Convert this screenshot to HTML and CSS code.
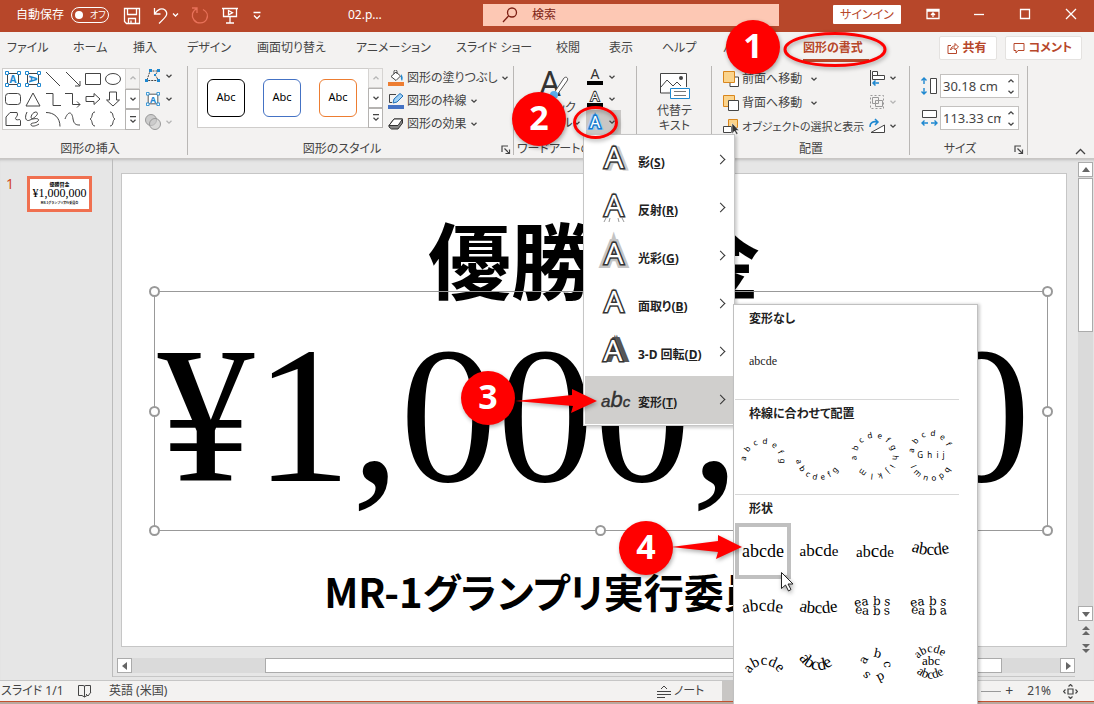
FILE: index.html
```
<!DOCTYPE html>
<html lang="ja">
<head>
<meta charset="utf-8">
<title>02.pptx</title>
<link rel="stylesheet" href="styles.css">
</head>
<body>
<svg class="defs" aria-hidden="true">
  <symbol id="chev" viewBox="0 0 8 8"><path d="M1.500 2.800 4 5.200 6.500 2.800" fill="none" stroke="currentColor" stroke-width="1.300"/></symbol>
  <symbol id="up" viewBox="0 0 8 8"><path d="M1.500 5.200 4 2.800 6.500 5.200" fill="none" stroke="currentColor" stroke-width="1.300"/></symbol>
  <symbol id="launch" viewBox="0 0 10 10"><path d="M1 7V1h6M3.500 3.500 8 8M8.500 4.500v4h-4" fill="none" stroke="#444" stroke-width="1.200"/></symbol>
  <symbol id="textbox" viewBox="0 0 16 16"><path d="M2.500 2.500h11v11h-11z" fill="#fff" stroke="#444"/><g fill="#fff" stroke="#1e88d0"><path d="M.5.5h3v3h-3zM12.500.5h3v3h-3zM.5 12.500h3v3h-3zM12.500 12.500h3v3h-3z"/></g><text x="8" y="12" text-anchor="middle" font-size="10" font-weight="700" fill="#1e88d0">A</text></symbol>
</svg>

<header class="titlebar">
  <span class="autosave">自動保存</span>
  <button class="toggle" aria-label="自動保存"><i></i>オフ</button>
  <button class="tb save" aria-label="保存"><svg width="18" height="18" viewBox="0 0 18 18"><path d="M1.500 1.500h15v15h-13l-2-2zM4.500 1.500v6h9v-6M5.500 16.500v-5h7v5M8 16.500v-3" /></svg></button>
  <button class="tb undo" aria-label="元に戻す"><svg width="28" height="18" viewBox="0 0 28 18"><path d="M1.500 1v6h6M1.500 7C5 2 9 .5 12 3c4 4 1 7-6 13.500"/><path d="m20 6.500 2.500 2.500L25 6.500"/></svg></button>
  <button class="tb redo" aria-label="やり直し"><svg width="18" height="18" viewBox="0 0 18 18"><path d="M1 1h5v5M6 1.500C1 4 0 9 3 13c3 4 10 4 12.500-.5 2-4 .5-8-3.500-10"/></svg></button>
  <button class="tb show" aria-label="スライド ショー"><svg width="16" height="18" viewBox="0 0 16 18"><path d="M0 1.500h16M1.500 1.500v8h13v-8M8 9.500v6M4 16h8"/><path d="m6.500 3.500 4 2.200-4 2.200z"/></svg></button>
  <button class="tb more" aria-label="カスタマイズ"><svg width="10" height="10" viewBox="0 0 10 10"><path d="M1.500 1.500h7M2 4.500l3 3 3-3"/></svg></button>
  <span class="doc">02.p…</span>
  <label class="search"><svg width="16" height="16" viewBox="0 0 16 16"><circle cx="10" cy="5.500" r="4.500"/><path d="M6.500 9 1 15"/></svg><input type="text" aria-label="検索" placeholder="検索"></label>
  <button class="signin">サインイン</button>
  <div class="winbtns">
    <button aria-label="リボンの表示オプション"><svg width="14" height="12" viewBox="0 0 14 12"><path d="M1 1.500h12v9H1zM1 3h12M7 9V5M5 7l2-2 2 2"/></svg></button>
    <button aria-label="最小化"><svg width="12" height="12" viewBox="0 0 12 12"><path d="M1 6.500h10"/></svg></button>
    <button aria-label="最大化"><svg width="12" height="12" viewBox="0 0 12 12"><path d="M1.500 1.500h9v9h-9z"/></svg></button>
    <button aria-label="閉じる"><svg width="12" height="12" viewBox="0 0 12 12"><path d="m1 1 10 10M11 1 1 11"/></svg></button>
  </div>
</header>

<nav class="tabs">
  <a href="#">ファイル</a><a href="#">ホーム</a><a href="#">挿入</a><a href="#">デザイン</a><a href="#">画面切り替え</a><a href="#">アニメーション</a><a href="#">スライド ショー</a><a href="#">校閲</a><a href="#">表示</a><a href="#">ヘルプ</a><a href="#">バ</a><a href="#" class="active">図形の書式</a>
  <div class="actions">
    <button><svg width="12" height="12" viewBox="0 0 12 12"><path d="M4 3.500H1v8h8.500V8M3.500 8C4 5 6 4 8 4V1.500L11.500 5 8 8V6C6 6 4.500 6.500 3.500 8z"/></svg>共有</button>
    <button><svg width="12" height="12" viewBox="0 0 12 12"><path d="M1 1.500h10v7H5L3 11V8.500H1z"/></svg>コメント</button>
  </div>
</nav>

<section class="ribbon">
  <div class="group g-insert">
    <div class="body">
      <div class="gallery">
        <div class="shapes">
          <svg viewBox="0 0 16 16"><use href="#textbox"/></svg>
          <svg viewBox="0 0 16 16"><g transform="rotate(90 8 8)"><use href="#textbox" width="16" height="16"/></g></svg>
          <svg viewBox="0 0 16 16"><path d="m1 1 14 14"/></svg>
          <svg viewBox="0 0 16 16"><path d="m1 1 14 14M15 10v5h-5"/></svg>
          <svg viewBox="0 0 16 16"><path d="M.5 2.500h15v11H.5z"/></svg>
          <svg viewBox="0 0 16 16"><ellipse cx="8" cy="8" rx="7.500" ry="5.500"/></svg>
          <svg viewBox="0 0 16 16"><rect x=".5" y="2.500" width="15" height="11" rx="3"/></svg>
          <svg viewBox="0 0 16 16"><path d="M8 2 15 15H1z"/></svg>
          <svg viewBox="0 0 16 16"><path d="M1 2.500h7v12h8"/></svg>
          <svg viewBox="0 0 16 16"><path d="M0 2.500h7.500v11H15M12 10.500l3 3-3 3"/></svg>
          <svg viewBox="0 0 16 16"><path d="M1 5.500h8v-3L15 8l-6 5.500v-3H1z"/></svg>
          <svg viewBox="0 0 16 16"><path d="M4.500 1v8h-3L8 15l6.500-6h-3V1z"/></svg>
          <svg viewBox="0 0 16 16"><path d="M1 14.500V6l4-4.500h7c2 4-3 5-1 7 2 1 4-1 4.500 1v5z"/></svg>
          <svg viewBox="0 0 16 16"><path d="M2 1c-3 6-1 10 3 8 5-2 10-7 6-8-4 0-7 7-3 7 4-1 7 0 5 2-2 3-8 1-7 4 1 2 5 1 8-1"/></svg>
          <svg viewBox="0 0 16 16"><path d="M1 1.500c8 0 14 5 14 14"/></svg>
          <svg viewBox="0 0 16 16"><path d="M0 8c3-8 7-8 8 0 1 6 4 6 7 6"/></svg>
          <svg viewBox="0 0 16 16"><path d="M10 1c-4 0-2 6-5 7 3 1 1 7 5 7"/></svg>
          <svg viewBox="0 0 16 16"><path d="M5 1c4 0 2 6 5 7-3 1-1 7-5 7"/></svg>
        </div>
        <div class="gscroll">
          <button class="off" aria-label="前の行"><svg><use href="#up"/></svg></button>
          <button aria-label="次の行"><svg><use href="#chev"/></svg></button>
          <button aria-label="その他"><svg viewBox="0 0 8 8"><path d="M1 .6h6M1.500 3.800 4 6.200 6.500 3.800" fill="none" stroke="currentColor" stroke-width="1.200"/></svg></button>
        </div>
      </div>
      <div class="iconcol">
        <button aria-label="図形の編集"><svg width="16" height="14" viewBox="0 0 16 14"><path d="M2 11 5 2h9L10 5.500l3.500 6H2" fill="none" stroke="#444" stroke-dasharray="2 1"/><path d="M4 0h3v3H4zM12 0h3v3h-3zM0 10h3v3H0zM12 10h3v3h-3zM9 5h2v2H9z" fill="#1e88d0"/></svg><svg class="c"><use href="#chev"/></svg></button>
        <button aria-label="テキスト ボックス"><svg width="16" height="14" viewBox="0 0 16 16"><use href="#textbox"/></svg><svg class="c"><use href="#chev"/></svg></button>
        <button class="off" aria-label="図形の結合"><svg width="16" height="16" viewBox="0 0 16 16"><circle cx="6" cy="6" r="5.500" fill="#ccc" stroke="#999"/><circle cx="10" cy="10" r="5.500" fill="#ccc" fill-opacity=".6" stroke="#999"/></svg><svg class="c"><use href="#chev"/></svg></button>
      </div>
    </div>
    <div class="label"><span>図形の挿入</span></div>
  </div>

  <div class="group g-style">
    <div class="body">
      <div class="presets">
        <button class="p1">Abc</button><button class="p2">Abc</button><button class="p3">Abc</button>
        <div class="gscroll">
          <button class="off" aria-label="前の行"><svg><use href="#up"/></svg></button>
          <button aria-label="次の行"><svg><use href="#chev"/></svg></button>
          <button aria-label="その他"><svg viewBox="0 0 8 8"><path d="M1 .6h6M1.500 3.800 4 6.200 6.500 3.800" fill="none" stroke="currentColor" stroke-width="1.200"/></svg></button>
        </div>
      </div>
      <div class="cmds">
        <button><svg width="16" height="16" viewBox="0 0 16 16"><path d="M0 12h16v4H0z" fill="#ed7d31"/><path d="M3 6.500 8 2l4.500 4L8 10.500zM6 4V1.500A1.500 1.500 0 0 1 9 1.500V4" fill="#fff" stroke="#444"/><path d="M13 4c2 2 2 5 1 7-1-1-1.500-3-1-7z" fill="#1e88d0"/></svg>図形の塗りつぶし<svg class="c"><use href="#chev"/></svg></button>
        <button><svg width="16" height="16" viewBox="0 0 16 16"><path d="M0 12h16v4H0z" fill="#4472c4"/><path d="M8 1.500H1.500v8H4" fill="none" stroke="#444"/><path d="m5 10 1-4 6-5.500L15 3 9 9z" fill="#9fd0f5" stroke="#1e6fb8"/></svg>図形の枠線<svg class="c"><use href="#chev"/></svg></button>
        <button><svg width="16" height="16" viewBox="0 0 16 16"><path d="M1 9.500 6 3h8.500v4L10 13H3.500L1 11z" fill="#888" stroke="#333"/><path d="M1 9.500 6 3h8.500L10 9.500z" fill="#fff" stroke="#333"/></svg>図形の効果<svg class="c"><use href="#chev"/></svg></button>
      </div>
    </div>
    <div class="label"><span>図形のスタイル</span><svg class="launch"><use href="#launch"/></svg></div>
  </div>

  <div class="group g-wordart">
    <div class="body">
      <button class="quick"><svg width="32" height="30" viewBox="0 0 32 30"><text x="0" y="26" font-size="34" fill="#333">A</text><path d="m15 23 10-15c2-2 5 0 3 3L18 25z" fill="#fff" stroke="#555"/><circle cx="15" cy="25" r="4" fill="#5aaeee"/></svg><span>クイック</span><span>スタイル<svg class="c"><use href="#chev"/></svg></span></button>
      <div class="acol">
        <button aria-label="文字の塗りつぶし"><svg width="16" height="16" viewBox="0 0 16 16"><text x="8" y="10" text-anchor="middle" font-size="14" fill="#333">A</text><path d="M0 12h16v4H0z"/></svg><svg class="c"><use href="#chev"/></svg></button>
        <button aria-label="文字の輪郭"><svg width="16" height="16" viewBox="0 0 16 16"><text x="8" y="10" text-anchor="middle" font-size="13" fill="#fff" stroke="#333" stroke-width="2" paint-order="stroke">A</text><path d="M0 12h16v4H0z"/></svg><svg class="c"><use href="#chev"/></svg></button>
        <button class="on" aria-label="文字の効果"><svg width="18" height="18" viewBox="0 0 18 18"><text x="9" y="15" text-anchor="middle" font-size="16" font-weight="700" fill="none" stroke="#9cd0f8" stroke-width="4">A</text><text x="9" y="15" text-anchor="middle" font-size="16" fill="#fff" stroke="#1778cc" stroke-width="3" paint-order="stroke">A</text></svg><svg class="c"><use href="#chev"/></svg></button>
      </div>
    </div>
    <div class="label"><span>ワードアートのスタイル</span></div>
  </div>

  <div class="group g-alt">
    <button class="alt"><svg width="32" height="28" viewBox="0 0 32 28"><path d="M1.500 21V1.500h26V15M1.500 21H11" fill="#fff" stroke="#444"/><path d="m2 15 6-7 6 6 4-4 4 4" fill="none" stroke="#444"/><circle cx="22" cy="6" r="2" fill="#444"/><path d="M11.500 16.500h19v10h-19z" fill="#fff" stroke="#1e88d0"/><path d="M15 19.500h12M15 23.500h12" stroke="#777"/></svg><span>代替テ</span><span>キスト</span></button>
  </div>

  <div class="group g-arrange">
    <div class="body">
      <div class="cmds">
        <button><svg width="16" height="16" viewBox="0 0 16 16"><path d="M7 6h8.500v9.500H7z" fill="#fff" stroke="#444"/><path d="M.5.5h11v11H.5z" fill="#fbd48c" stroke="#d9861c"/></svg>前面へ移動<svg class="c wide"><use href="#chev"/></svg></button>
        <button><svg width="16" height="16" viewBox="0 0 16 16"><path d="M.5.5h11v11H.5z" fill="#fbd48c" stroke="#d9861c"/><path d="M5.500 5.500h10v10h-10z" fill="#fff" stroke="#444"/></svg>背面へ移動<svg class="c wide"><use href="#chev"/></svg></button>
        <button class="long"><svg width="16" height="16" viewBox="0 0 16 16"><path d="M5.500.5h9v8h-9z" fill="#fbd48c" stroke="#d9861c"/><path d="M.5 7.500h8v6h-8z" fill="#fff" stroke="#444"/><path d="M9 4v11l2.500-3 2 3.500 1.500-1-2-3h3z" fill="#333" stroke="#fff" stroke-width=".5"/></svg>オブジェクトの選択と表示</button>
      </div>
      <div class="iconcol">
        <button aria-label="配置"><svg width="16" height="16" viewBox="0 0 16 16"><path d="M1.500 0v16M3.500 1.500h5v4h-5zM3.500 5.500h12v4h-12z" fill="#fff" stroke="#444"/><path d="M4 13h6M6.500 10.500 4 13l2.500 2.500" fill="none" stroke="#1e88d0" stroke-width="1.500"/></svg><svg class="c"><use href="#chev"/></svg></button>
        <button class="off" aria-label="グループ化"><svg width="16" height="16" viewBox="0 0 16 16"><path d="M3.500 3.500h6v6h-6zM6.500 6.500h7v6h-7z" fill="none" stroke="#999"/><path d="M1.500 1.500h13v13h-13z" fill="none" stroke="#999" stroke-dasharray="2 2"/></svg><svg class="c"><use href="#chev"/></svg></button>
        <button aria-label="回転"><svg width="16" height="16" viewBox="0 0 16 16"><path d="M2 14.500h13.500V7z" fill="#fff" stroke="#444"/><path d="M1 9c0-5 4-6 7-5M6 1l3 3-3 3" fill="none" stroke="#1e88d0" stroke-width="1.500"/></svg><svg class="c"><use href="#chev"/></svg></button>
      </div>
    </div>
    <div class="label"><span>配置</span></div>
  </div>

  <div class="group g-size">
    <div class="body">
      <div class="size"><svg width="17" height="18" viewBox="0 0 17 18"><path d="M3 1v6M3 11v6M.5 3.500 3 1l2.500 2.500M.5 14.500 3 17l2.500-2.500" fill="none" stroke="#1e88d0" stroke-width="1.400"/><path d="M9.500 1.500h6v15h-6z" fill="#fff" stroke="#444"/></svg><div class="spin"><input type="text" aria-label="高さ" value="30.18 cm"><div><button aria-label="高さを増やす"><svg><use href="#up"/></svg></button><button aria-label="高さを減らす"><svg><use href="#chev"/></svg></button></div></div></div>
      <div class="size"><svg width="17" height="18" viewBox="0 0 17 18"><path d="M1.500 1.500h14v7h-14z" fill="#fff" stroke="#444"/><path d="M1 14h6M10 14h6M3.500 11.500 1 14l2.500 2.500M13.500 11.500 16 14l-2.500 2.500" fill="none" stroke="#1e88d0" stroke-width="1.400"/></svg><div class="spin"><input type="text" aria-label="幅" value="113.33 cm"><div><button aria-label="幅を増やす"><svg><use href="#up"/></svg></button><button aria-label="幅を減らす"><svg><use href="#chev"/></svg></button></div></div></div>
    </div>
    <div class="label"><span>サイズ</span><svg class="launch"><use href="#launch"/></svg></div>
  </div>
  <button class="collapse" aria-label="リボンを折りたたむ"><svg width="11" height="7" viewBox="0 0 11 7"><path d="m1 6 4.500-4.500L10 6" fill="none" stroke="#444" stroke-width="1.300"/></svg></button>
</section>

<main class="work">
  <aside class="thumbs">
    <span class="num">1</span>
    <div class="thumb"><b>優勝賞金</b><span>¥1,000,000</span><i>MR-1グランプリ実行委員会</i></div>
  </aside>
  <div class="stage">
    <article class="slide">
      <h1>優勝賞金</h1>
      <div class="amount">¥1,000,000<i class="h nw"></i><i class="h ne"></i><i class="h w"></i><i class="h e"></i><i class="h sw"></i><i class="h s"></i><i class="h se"></i></div>
      <p>MR-1グランプリ実行委員会</p>
    </article>
    <div class="hscroll">
      <button aria-label="左へスクロール"><svg width="6" height="8"><path d="M5 0v8L0 4z" fill="#666"/></svg></button><div class="track"><div class="bar"></div></div><button aria-label="右へスクロール"><svg width="6" height="8"><path d="M1 0v8l5-4z" fill="#666"/></svg></button>
    </div>
  </div>
  <div class="vscroll">
    <button aria-label="上へスクロール"><svg width="8" height="6"><path d="M0 5h8L4 0z" fill="#666"/></svg></button>
    <div class="track"><div class="bar"></div></div>
    <button aria-label="下へスクロール"><svg width="8" height="6"><path d="M0 1h8L4 6z" fill="#666"/></svg></button>
    <button class="pg" aria-label="前のスライド"><svg width="8" height="9"><path d="M0 4h8L4 0zM0 9h8L4 5z" fill="#666"/></svg></button>
    <button class="pg" aria-label="次のスライド"><svg width="8" height="9"><path d="M0 0h8L4 4zM0 5h8L4 9z" fill="#666"/></svg></button>
  </div>
</main>

<footer class="status">
  <span class="count">スライド 1/1</span>
  <svg width="15" height="14" viewBox="0 0 15 14"><path d="M7.500 2v11L5 11.500H1.500v-10H6zM7.500 2 9 1.500h4.500v7M7.500 13l2.500-1.500M9 10l2 2 3-4" fill="none" stroke="#444"/></svg>
  <span class="lang">英語 (米国)</span>
  <button class="notes"><svg width="14" height="13" viewBox="0 0 14 13"><path d="M4 4l3-3 3 3M0 6.500h14M0 9.500h14M0 12.500h8" fill="none" stroke="#444"/></svg>ノート</button>
  <button class="view" aria-label="標準"></button>
  <div class="zoombar"><i></i><button aria-label="拡大">+</button><span>21%</span><svg width="15" height="15" viewBox="0 0 15 15"><path d="M5 5h5v5H5zM5.500 2.500l2-2 2 2M5.500 12.500l2 2 2-2M2.500 5.500l-2 2 2 2M12.500 5.500l2 2-2 2" fill="none" stroke="#444" stroke-width="1.200"/></svg></div>
</footer>
<div class="edge"></div>

<ul class="menu">
  <li><button><svg viewBox="0 0 30 30"><text x="17" y="26" class="ga sh">A</text><text x="14" y="25" class="ga">A</text></svg><span>影(<u>S</u>)</span><em></em></button></li>
  <li><button><svg viewBox="0 0 30 30"><path d="m4 31 2-4M9 31l1-4M19 31l-1-4M24 31l-2-4" stroke="#999" fill="none"/><text x="14" y="25" class="ga">A</text></svg><span>反射(<u>R</u>)</span><em></em></button></li>
  <li><button><svg viewBox="0 0 30 30"><text x="14" y="25" class="ga glow">A</text><text x="14" y="25" class="ga">A</text></svg><span>光彩(<u>G</u>)</span><em></em></button></li>
  <li><button><svg viewBox="0 0 30 30"><text x="14" y="25" class="ga">A</text></svg><span>面取り(<u>B</u>)</span><em></em></button></li>
  <li><button><svg viewBox="0 0 30 30"><text x="17" y="25" class="ga deep">A</text><text x="15" y="25" class="ga deep">A</text><text x="13" y="26" class="ga">A</text></svg><span>3-D 回転(<u>D</u>)</span><em></em></button></li>
  <li class="sel"><button><svg viewBox="0 0 30 30"><text x="1" y="24" font-family="Liberation Sans" font-style="italic" font-weight="400" fill="#333" stroke="#333" stroke-width=".4"><tspan font-size="17">a</tspan><tspan font-size="22">b</tspan><tspan font-size="15">c</tspan></text></svg><span>変形(<u>T</u>)</span><em></em></button></li>
</ul>

<section class="submenu">
  <h2>変形なし</h2>
  <button class="none">abcde</button>
  <h2 class="rule">枠線に合わせて配置</h2>
  <div class="grid path">
    <button aria-label="円弧"><svg viewBox="0 0 56 56"><path id="a1" d="M11 33A17 17 0 1 1 45 33"/><text><textPath href="#a1">a  b  c  d  e  f  g</textPath></text></svg></button>
    <button aria-label="円弧: 下向き"><svg viewBox="0 0 56 56"><path id="a2" d="M5 29A23 23 0 0 0 51 29"/><text><textPath href="#a2" startOffset="3">a  b  c  d  e  f  g</textPath></text></svg></button>
    <button aria-label="円"><svg viewBox="0 0 56 56"><path id="a3" d="M10 32A18 18 0 1 1 11 35"/><text><textPath href="#a3">a  b  c  d  e  f  g  h  i  j  k  l  m  n</textPath></text></svg></button>
    <button aria-label="ボタン"><svg viewBox="0 0 56 56"><path id="a4" d="M11 25A17 17 0 0 1 45 25L47 32"/><path id="a5" d="M6 31A22 22 0 0 0 50 31"/><text><textPath href="#a4">a  b  c  d  e  f</textPath></text><text><textPath href="#a5" startOffset="8">l  m  n  o  p  q</textPath></text><text x="28" y="30" text-anchor="middle">G  h  i  j</text></svg></button>
  </div>
  <h2 class="rule">形状</h2>
  <div class="grid warp">
    <button class="sel" aria-label="四角"><svg viewBox="0 0 56 56"><text x="28" y="34" text-anchor="middle" font-size="18">abcde</text></svg></button>
    <button aria-label="凸レンズ"><svg viewBox="0 0 56 56"><text x="28" y="33" text-anchor="middle"><tspan font-size="15">a</tspan><tspan font-size="17">b</tspan><tspan font-size="19">c</tspan><tspan font-size="17">d</tspan><tspan font-size="15">e</tspan></text></svg></button>
    <button aria-label="山形"><svg viewBox="0 0 56 56"><text x="28" y="34" text-anchor="middle"><tspan font-size="15">a</tspan><tspan font-size="16">b</tspan><tspan font-size="19">c</tspan><tspan font-size="16">d</tspan><tspan font-size="15">e</tspan></text></svg></button>
    <button aria-label="谷形"><svg viewBox="0 0 56 56"><path id="w4" d="M8 28Q28 36 52 28"/><text font-size="17"><textPath href="#w4">abcde</textPath></text></svg></button>
    <button aria-label="波形"><svg viewBox="0 0 56 56"><path id="w5" d="M8 34Q28 29 52 35"/><text font-size="17"><textPath href="#w5">abcde</textPath></text></svg></button>
    <button aria-label="波形 2"><svg viewBox="0 0 56 56"><path id="w6" d="M8 32Q28 37 52 31"/><text font-size="17"><textPath href="#w6">abcde</textPath></text></svg></button>
    <button aria-label="リング: 内側"><svg viewBox="0 0 56 56"><path id="w7" d="M8 28Q28 24 54 28"/><path id="w8" d="M8 34Q28 38 54 34"/><text font-size="12" class="fat"><textPath href="#w7">ea b s</textPath></text><text font-size="12" class="fat"><textPath href="#w8">ea b s</textPath></text></svg></button>
    <button aria-label="リング: 外側"><svg viewBox="0 0 56 56"><text font-size="12" class="fat"><textPath href="#w7">ea b s</textPath></text><text font-size="12" class="fat"><textPath href="#w8">ea b a</textPath></text></svg></button>
    <button aria-label="アーチ"><svg viewBox="0 0 56 56"><path id="w9" d="M15 39A16 16 0 0 1 45 42"/><text font-size="15"><textPath href="#w9">abcde</textPath></text></svg></button>
    <button aria-label="アーチ: 下向き"><svg viewBox="0 0 56 56"><path id="w10" d="M8 23Q15 35 28 35T52 18"/><text font-size="17"><textPath href="#w10">abcde</textPath></text></svg></button>
    <button aria-label="円"><svg viewBox="0 0 56 56"><path id="w11" d="M19 30A9 9 0 1 1 19 32"/><text font-size="12" class="fat"><textPath href="#w11">a b c d s</textPath></text></svg></button>
    <button aria-label="ボタン"><svg viewBox="0 0 56 56"><path id="w12" d="M15 24Q28 10 44 25"/><path id="w13" d="M11 36Q28 52 48 34"/><text font-size="12"><textPath href="#w12">abcde</textPath></text><text x="28" y="30" text-anchor="middle" font-size="13">abc</text><text font-size="13"><textPath href="#w13" startOffset="3">abcde</textPath></text></svg></button>
  </div>
</section>

<svg class="marks" width="1094" height="704" viewBox="0 0 1094 704" aria-hidden="true">
  <ellipse cx="835" cy="49.500" rx="50" ry="16"/>
  <ellipse cx="595.500" cy="122.500" rx="21" ry="15"/>
  <path d="M515 401 572 395V389L597 401 571 413 573 406z"/>
  <path d="M671 547 718 541V535L742 547 716 559 718 552z"/>
  <path class="cursor" d="M781.500 572.500v16l4-3.500 3 6 2.500-1.500-3-5.500h5z"/>
</svg>
<b class="badge b1">1</b><b class="badge b2">2</b><b class="badge b3">3</b><b class="badge b4">4</b>
</body>
</html>
```
FILE: styles.css
```
* { box-sizing: border-box; }
html { height: 100%; }
body {
  margin: 0; min-height: 100%; position: relative; overflow: hidden;
  display: flex; flex-direction: column;
  font: 12px/16px "Noto Sans", "Noto Sans CJK JP", sans-serif;
  font-feature-settings: "palt"; color: #444; background: #f3f2f1; white-space: nowrap;
}
button { font: inherit; font-feature-settings: inherit; color: inherit; background: none; border: 0; padding: 0; margin: 0; white-space: nowrap; }
input { font: inherit; color: inherit; min-width: 0; border: 0; padding: 0; background: none; }
svg { flex: none; display: block; }
h1, h2, p, ul { margin: 0; padding: 0; list-style: none; }
.defs { position: absolute; width: 0; height: 0; }
.c { width: 8px; height: 8px; }
.off { color: #b5b5b5; }

/* Title bar */
.titlebar { height: 32px; background: #b7472a; color: #fff; display: flex; align-items: center; padding-left: 16px; }
.titlebar svg { fill: none; stroke: currentColor; stroke-width: 1.300; }
.autosave { width: 48px; padding-bottom: 2px; }
.toggle { width: 38px; height: 16px; margin: 0 0 3px 7px; border: 1px solid #fff; border-radius: 8px; font-size: 9px; line-height: 14px; display: flex; align-items: center; gap: 7px; padding-left: 3px; }
.toggle i { width: 8px; height: 8px; border-radius: 50%; background: #fff; }
.save { margin-left: 14px; }
.undo { margin-left: 12px; }
.redo { margin-left: 10px; color: #e8725a; }
.show { margin-left: 13px; }
.more { margin-left: 14px; }
.doc { margin-left: 86px; width: 135px; padding-bottom: 2px; }
.search { flex: 1; min-width: 100px; height: 22px; margin-bottom: 2px; background: #fdc8b4; color: #7d1f14; display: flex; align-items: center; gap: 14px; padding-left: 19px; }
.search input { flex: 1; }
.search input::placeholder { color: #7d1f14; opacity: 1; }
.signin { width: 68px; height: 19px; margin-left: 54px; margin-bottom: 3px; background: #fff; color: #b7472a; line-height: 18px; border-radius: 1px; }
.winbtns { display: flex; margin: 0 0 4px 9px; }
.winbtns button { width: 46px; height: 24px; display: flex; justify-content: center; align-items: center; }

/* Tabs */
.tabs { height: 32px; display: grid; align-items: center; grid-template-columns: 66px 60px 54px 70px 99px 100px 100px 53px 53px 61px 80px 66px 1fr; padding: 0 12px 0 7px; }
.tabs a { color: #444; text-decoration: none; height: 28px; line-height: 27px; }
.tabs .active { color: #b7472a; font-weight: 700; border-bottom: 3px solid #b7472a; }
.actions { display: flex; justify-content: flex-end; gap: 8px; }
.actions button { height: 24px; padding: 0 9px 0 7px; display: flex; align-items: center; gap: 4px; background: #fff; border: 1px solid #e4e2e0; border-radius: 2px; color: #b7472a; font-weight: 700; }
.actions svg { fill: none; stroke: #b7472a; }

/* Ribbon */
.ribbon { height: 95px; border-bottom: 1px solid #c8c6c4; display: grid; grid-template-columns: 188px 326px 123px 75px 198px 118px 1fr; }
.group { padding-top: 2px; display: flex; flex-direction: column; background: linear-gradient(#b9b7b5, #b9b7b5) right 0 top 2px / 1px 89px no-repeat; min-width: 0; }
.body { flex: 1; display: flex; min-height: 0; padding-top: 2px; }
.label { height: 18px; line-height: 18px; display: flex; justify-content: center; position: relative; }
.launch { position: absolute; right: 3px; top: 5px; width: 10px; height: 10px; }
.gallery, .presets { display: flex; background: #fff; border: 1px solid #cfcdcb; }
.gallery { width: 138px; height: 62px; margin-left: 2px; }
.shapes { flex: 1; display: grid; grid-template-columns: repeat(6, 20px); align-items: center; justify-items: center; fill: none; stroke: #444; }
.shapes svg { width: 16px; height: 16px; overflow: visible; }
#textbox text { stroke: none; }
.gscroll { width: 15px; display: flex; flex-direction: column; margin: -1px -1px -1px auto; }
.gscroll button { flex: 1; display: flex; align-items: center; justify-content: center; border: 1px solid #b5b3b1; background: #fff; }
.gscroll .off { background: #f3f2f1; border-color: #d6d4d2; }
.gscroll svg { width: 8px; height: 8px; }
.iconcol { display: flex; flex-direction: column; }
.iconcol button { height: 23px; display: flex; align-items: center; gap: 4px; }
.g-insert .iconcol { margin: -4px 0 0 5px; }
.g-insert .label { padding-right: 8px; }
.presets { width: 186px; height: 60px; margin-left: 9px; padding-left: 9px; align-items: center; gap: 18px; }
.presets > button { flex: none; width: 38px; height: 38px; border: 1px solid #000; border-radius: 6px; font-size: 11px; line-height: 34px; color: #000; background: #fff; padding-bottom: 3px; }
.presets .p2 { border-color: #4472c4; }
.presets .p3 { border-color: #ed7d31; }
.presets .gscroll { align-self: stretch; flex: none; margin-left: -7px; }
.g-style .label { padding-right: 18px; }
.cmds { display: flex; flex-direction: column; }
.cmds button { height: 23px; display: flex; align-items: center; gap: 3px; }
.g-style .cmds { margin: -2px 0 0 5px; }
.quick { width: 66px; margin-left: 8px; padding-top: 2px; display: flex; flex-direction: column; align-items: center; line-height: 15px; }
.quick svg { overflow: visible; }
.quick .c { display: inline-block; }
.g-wordart .body { padding-top: 2px; }
.g-wordart .label { justify-content: flex-start; padding-left: 3px; }
.acol { margin: -2px 0 0 -2px; }
.acol button { width: 35px; height: 22px; padding-left: 1px; display: flex; align-items: center; gap: 5px; }
.acol svg { overflow: visible; }
.acol .on { background: #c9c7c5; height: 24px; padding-left: 0; gap: 4px; }
.alt { display: flex; flex-direction: column; align-items: center; padding-top: 6px; line-height: 15px; }
.alt svg { margin-bottom: 3px; }
.g-arrange .cmds { width: 146px; margin: -1px 0 0 11px; }
.g-arrange .cmds button { height: 24px; }
.g-arrange .cmds .long { font-size: 11px; }
.g-arrange .cmds .wide { margin-left: 5px; }
.g-arrange .iconcol { margin: -2px 0 0 0; }
.g-arrange .iconcol button { height: 24px; }
.g-size .body { flex-direction: column; gap: 8px; padding: 8px 0 0 11px; }
.size { display: flex; align-items: center; gap: 2px; }
.spin { width: 79px; height: 24px; display: flex; border: 1px solid #c3c1bf; background: #fff; font-size: 13px; }
.spin input { width: 60px; padding-left: 2px; }
.spin > div { flex: none; width: 15px; margin-left: auto; display: flex; flex-direction: column; }
.spin button { flex: 1; display: flex; align-items: center; justify-content: center; }
.spin button svg { width: 8px; height: 8px; }
.g-size .label { padding-right: 18px; }
.g-size .launch { right: 4px; }
.collapse { align-self: end; justify-self: end; padding: 0 8px 3px; }

/* Work area */
.work { flex: 1; display: flex; background: #e6e6e6; border-bottom: 1px solid #c6c6c6; box-shadow: inset 0 3px 3px -2px #bbb; }
.thumbs { width: 113px; margin-bottom: 3px; padding: 17px 0 0 6px; border-right: 1px solid #bbb; display: flex; gap: 12px; align-items: flex-start; }
.num { width: 9px; color: #d24726; font-size: 14px; }
.thumb { width: 65px; height: 36px; border: 3px solid #f07050; background: #fff; color: #000; display: flex; flex-direction: column; align-items: center; overflow: hidden; line-height: 8px; padding-top: 2px; }
.thumb b { font-size: 5px; line-height: 6px; }
.thumb span { font: 12px/13px "Liberation Serif", serif; }
.thumb i { font: 700 3px/6px "Noto Sans CJK JP", sans-serif; }
.stage { flex: 1; min-width: 0; display: flex; flex-direction: column; margin-bottom: 3px; border-bottom: 1px solid #c6c6c6; }
.slide { flex: 1; margin: 14px 8px 11px 8px; background: #fff; border: 1px solid #c6c6c6; color: #000; display: flex; flex-direction: column; padding: 41px 18px 0 32px; font-family: "Noto Sans CJK JP", sans-serif; }
.slide h1 { font-size: 83px; line-height: 84px; font-weight: 700; text-align: center; padding-right: 14px; }
.amount { height: 240px; margin-top: -8px; padding: 12px 14px 0 0; border: 1px solid #999; font: 194px/224px "Liberation Serif", serif; text-align: center; position: relative; }
.slide p { font-size: 40px; line-height: 50px; font-weight: 700; text-align: center; padding-right: 74px; margin-top: 35px; }
.h { position: absolute; width: 11px; height: 11px; border: 2px solid #999; border-radius: 50%; background: #fff; }
.nw { left: -6px; top: -6px; } .ne { right: -6px; top: -6px; }
.w { left: -6px; top: 114px; } .e { right: -6px; top: 114px; }
.sw { left: -6px; bottom: -6px; } .s { left: calc(50% - 6px); bottom: -6px; } .se { right: -6px; bottom: -6px; }
.hscroll { display: flex; height: 15px; margin: 0 0 3px 4px; }
.hscroll button, .vscroll button { width: 15px; height: 15px; background: #fff; border: 1px solid #ababab; display: flex; align-items: center; justify-content: center; flex: none; }
.track { flex: 1; background: #dadada; }
.bar { background: #fff; border: 1px solid #ababab; }
.hscroll .bar { height: 15px; margin: 0 58px 0 133px; }
.vscroll { width: 19px; padding: 3px 1px 0 3px; display: flex; flex-direction: column; }
.vscroll .bar { height: 154px; margin-top: 1px; }
.vscroll .pg { border: 0; background: none; height: 18px; }
.vscroll .pg:last-child { margin-bottom: 23px; }

/* Status bar */
.status { height: 20px; display: flex; align-items: center; line-height: 18px; }
.count { width: 77px; padding-left: 1px; }
.lang { margin-left: 17px; }
.notes { margin-left: auto; display: flex; align-items: center; gap: 3px; }
.view { flex: none; width: 46px; height: 20px; background: #c8c6c4; margin: 0 213px 0 18px; }
.zoombar { display: flex; align-items: center; margin-right: 16px; }
.zoombar i { width: 20px; height: 1px; background: #999; }
.zoombar button { width: 16px; font-size: 14px; }
.zoombar span { margin: 0 12px 0 10px; }
.edge { height: 3px; border-top: 1px solid #c3502f; background: #b9a89f; }

/* Text effects menu */
.menu { position: absolute; left: 583px; top: 134px; width: 152px; padding: 1px; background: #fff; border: 1px solid #c6c6c6; box-shadow: 2px 2px 3px #0003; color: #222; font-weight: 700; }
.menu button { width: 100%; height: 48px; display: flex; align-items: center; padding: 2px 9px 0 15px; font-weight: 700; }
.menu li.sel { background: #d0cfcd; }
.menu svg { width: 30px; height: 30px; margin: -6px 8px 0 0; overflow: visible; }
.menu span { flex: 1; text-align: left; padding-top: 4px; }
.menu em { width: 7px; height: 7px; border: solid #333; border-width: 1px 1px 0 0; transform: rotate(45deg); margin-top: -4px; }
.ga { font: 400 30px "Open Sans", sans-serif; text-anchor: middle; fill: #fff; stroke: #333; stroke-width: 3px; paint-order: stroke; }
.sh { fill: #ccc; stroke: #ccc; stroke-width: 3px; }
.glow { fill: #c4c4c4; stroke: #c4c4c4; stroke-width: 8px; }
.deep { fill: #666; stroke: #555; stroke-width: 4px; }

/* Transform gallery */
.submenu { position: absolute; left: 733px; top: 304px; width: 245px; height: 400px; padding: 0 18px 0 1px; background: #fff; border: 1px solid #c0c0c0; border-bottom: 0; box-shadow: 2px 0 3px #0003; color: #222; overflow: hidden; }
.submenu h2 { font-size: 12px; line-height: 28px; font-weight: 700; padding-left: 14px; }
.submenu .rule { border-top: 1px solid #d8d8d8; }
.none { display: block; height: 66px; padding: 0 14px 10px; font: 12px "Liberation Serif", serif; }
.grid { display: grid; grid-template-columns: repeat(4, 56px); }
.grid svg { width: 56px; height: 56px; overflow: visible; }
.grid path { fill: none; }
.path { height: 66px; }
.path button { height: 56px; }
.path text { font: 8px "Noto Sans", sans-serif; white-space: pre; }
.warp text { font-family: "Liberation Serif", serif; }
.warp .fat { font-family: "DejaVu Serif", serif; }
.warp button { height: 56px; }
.warp .sel { width: 56px; height: 56px; outline: 4px solid #c0c0c0; outline-offset: -4px; }

/* Annotations */
.marks { position: absolute; left: 0; top: 0; pointer-events: none; fill: #f00; filter: drop-shadow(1px 2px 2px #0005); }
.marks ellipse { fill: none; stroke: #f00; stroke-width: 3; }
.marks .cursor { fill: #fff; stroke: #222; }
.badge { position: absolute; width: 54px; height: 54px; border-radius: 50%; background: #f00; color: #fff; font: 700 34px/50px "Open Sans", sans-serif; text-align: center; box-shadow: 1px 2px 4px #0005; }
.b1 { left: 726px; top: 20px; } .b2 { left: 512px; top: 92px; } .b3 { left: 461px; top: 371px; } .b4 { left: 619px; top: 521px; }
```
